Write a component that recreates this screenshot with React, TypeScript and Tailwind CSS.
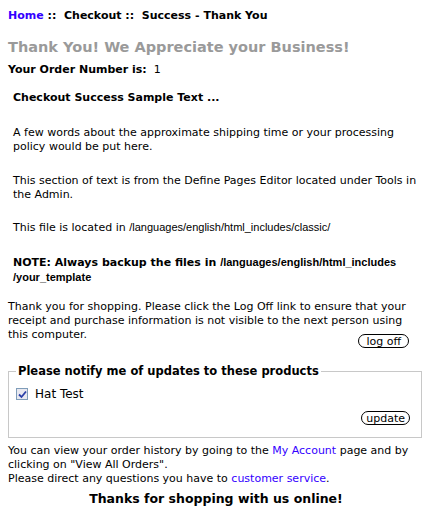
import React from "react";

const V = { fontFamily: "Verdana, 'DejaVu Sans', sans-serif" };
const A = { fontFamily: "Tahoma, 'Liberation Sans', Arial, sans-serif" };

export default function App() {
  return (
    <div className="w-[432px] h-[523px] bg-white text-black text-[11px] leading-[14px]" style={V}>
      <div className="px-2 pt-[9px] font-bold">
        <span className="text-[#3300ff]">Home</span>&nbsp;::&nbsp; Checkout ::&nbsp; Success - Thank You
      </div>
      <h1 className="px-2 mt-[15px] text-[14.5px] leading-[18px] font-bold text-[#9a9a9a]">
        Thank You! We Appreciate your Business!
      </h1>
      <div className="px-2 mt-[7px]">
        <span className="font-bold">Your Order Number is:</span>&nbsp; 1
      </div>
      <div className="px-[13px] mt-[14px]">
        <p className="font-bold">Checkout Success Sample Text ...</p>
        <p className="mt-[21px]">
          A few words about the approximate shipping time or your processing policy would be put here.
        </p>
        <p className="mt-[20px]">
          This section of text is from the Define Pages Editor located under Tools in the Admin.
        </p>
        <p className="mt-[18px]">
          This file is located in <span style={A}>/languages/english/html_includes/classic/</span>
        </p>
        <p className="mt-[20px] font-bold">
          NOTE: Always backup the files in{" "}
          <span style={A}>/languages/english/html_includes /your_template</span>
        </p>
      </div>
      <div className="px-2 mt-[15px]">
        <p>
          Thank you for shopping. Please click the Log Off link to ensure that your receipt and purchase
          information is not visible to the next person using this computer.
        </p>
        <div className="flex justify-end pr-[15px] -mt-[8px]">
          <button className="h-[14px] px-[7px] rounded-full border border-black bg-white text-[11px] leading-[11px]" style={V}>
            log off
          </button>
        </div>
      </div>
      <fieldset className="mx-2 mt-[16px] w-[414px] border border-[#c8c8c8] px-[7px] pb-[12px] pt-[1px]">
        <legend className="px-[2px] text-[11.5px] leading-[14px] font-bold">
          Please notify me of updates to these products
        </legend>
        <label className="flex items-center gap-[7px] mt-[8px] text-[12px]">
          <span className="w-[12px] h-[12px] border border-[#7f9db9] bg-[#e8e8f0] flex items-center justify-center">
            <svg width="9" height="9" viewBox="0 0 9 9">
              <path d="M1 4.5 L3.5 7 L8 1.5" stroke="#2a3fa8" strokeWidth="1.8" fill="none" />
            </svg>
          </span>
          Hat Test
        </label>
        <div className="flex justify-end pr-[4px] mt-[10px]">
          <button className="h-[14px] px-[4px] rounded-full border border-black bg-white text-[11px] leading-[11px]" style={V}>
            update
          </button>
        </div>
      </fieldset>
      <div className="px-2 mt-[6px]">
        <p>
          You can view your order history by going to the <span className="text-[#3300ff]">My Account</span> page and by
          clicking on "View All Orders".
        </p>
        <p>
          Please direct any questions you have to <span className="text-[#3300ff]">customer service</span>.
        </p>
      </div>
      <div className="text-center font-bold text-[12.5px] leading-[16px] mt-[5px]">
        Thanks for shopping with us online!
      </div>
    </div>
  );
}
